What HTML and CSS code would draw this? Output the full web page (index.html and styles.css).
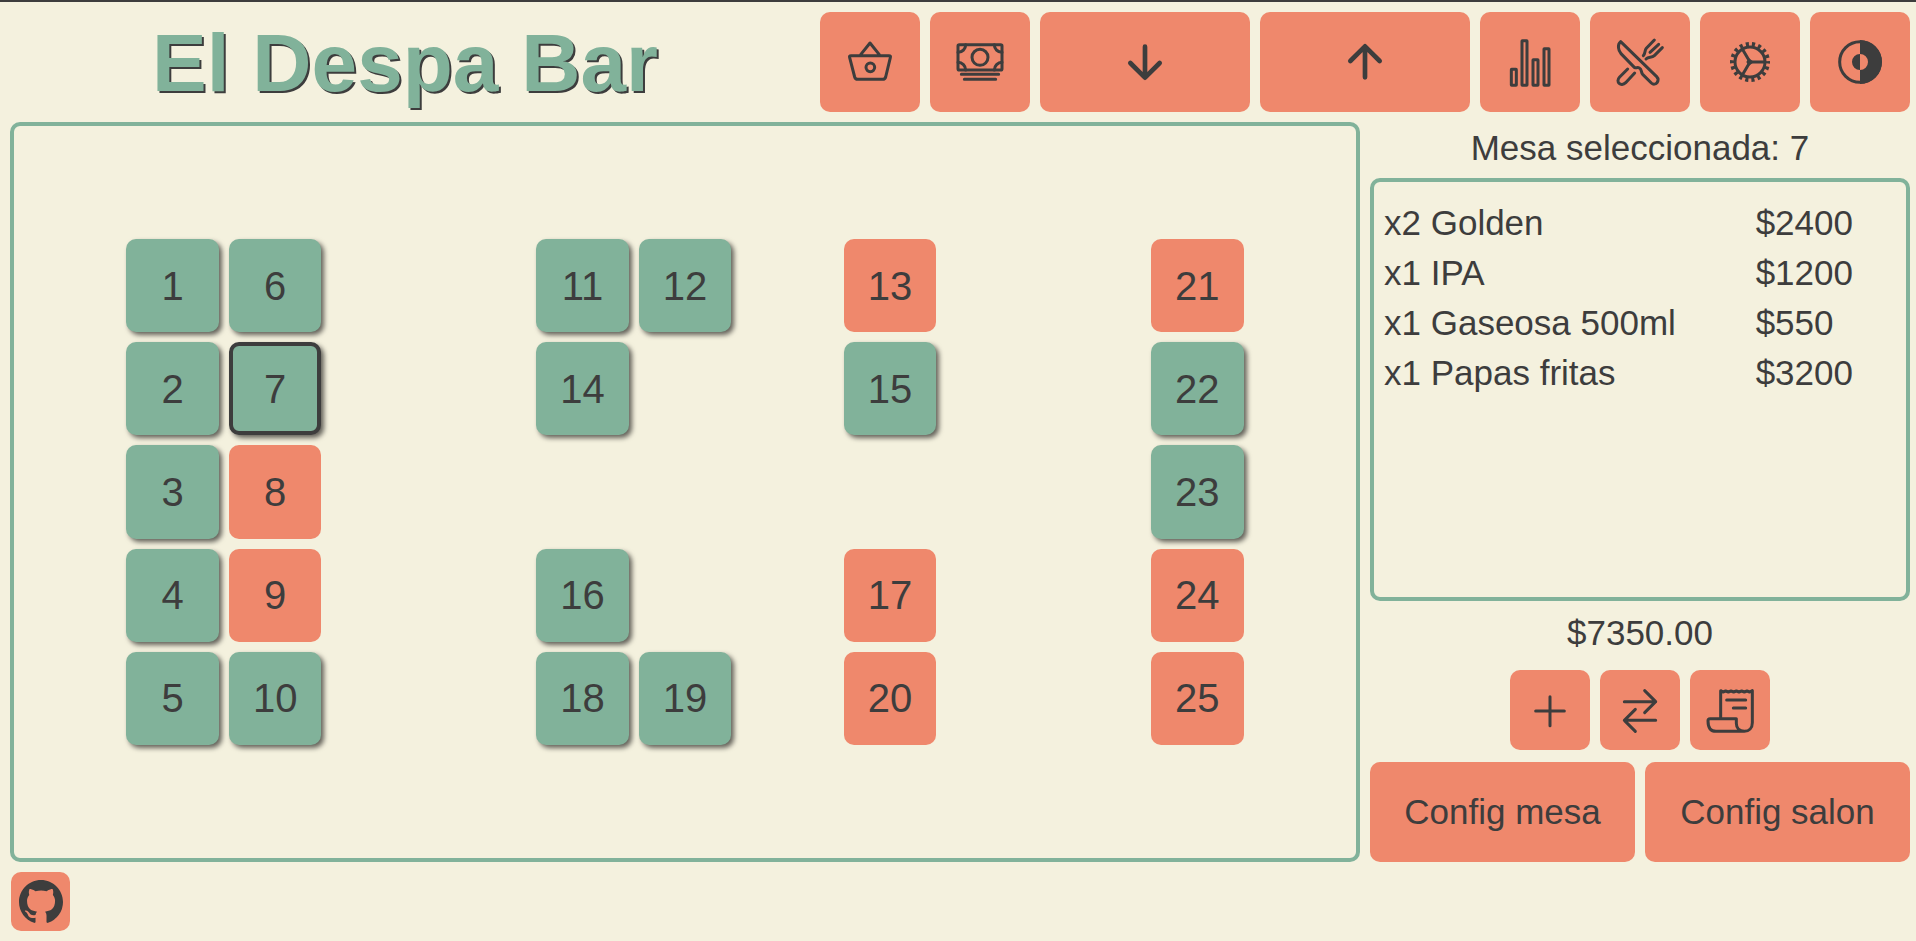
FILE: index.html
```html
<!DOCTYPE html>
<html lang="es">
<head>
<meta charset="utf-8">
<meta name="viewport" content="width=device-width, initial-scale=1">
<title>El Despa Bar</title>
<link rel="stylesheet" href="styles.css">
</head>
<body class="page">
<header class="header">
  <h1 class="title">El Despa Bar</h1>
  <nav class="toolbar" aria-label="Herramientas">
    <button class="btn" type="button" aria-label="Pedidos"><svg class="icon" viewBox="75 75 150 150"><path d="M122 128 150 93 178 128M93 131H207Q213 131 211 137L197 195Q195 202 188 202H113Q106 202 104 195L89 137Q87 131 93 131Z"/><circle cx="151" cy="166" r="13"/></svg></button>
    <button class="btn" type="button" aria-label="Caja"><svg class="icon" viewBox="75 75 150 150"><rect x="84" y="98" width="132" height="76" rx="4"/><circle cx="150" cy="136" r="24"/><path d="M107 98A23 23 0 0 1 84 121M193 98A23 23 0 0 0 216 121M107 174A23 23 0 0 0 84 151M193 174A23 23 0 0 1 216 151M94 187H206M103 202H197"/></svg></button>
    <button class="btn wide" type="button" aria-label="Bajar"><svg class="icon thick" viewBox="75 75 150 150"><path d="M150 104V196M106 153 150 197 194 153"/></svg></button>
    <button class="btn wide" type="button" aria-label="Subir"><svg class="icon thick" viewBox="75 75 150 150"><path d="M150 196V104M106 147 150 103 194 147"/></svg></button>
    <button class="btn" type="button" aria-label="Estadísticas"><svg class="icon" viewBox="75 75 150 150"><rect x="94" y="172" width="15" height="48" rx="1"/><rect x="126" y="86" width="15" height="134" rx="1"/><rect x="159" y="143" width="15" height="77" rx="1"/><rect x="192" y="110" width="15" height="110" rx="1"/></svg></button>
    <button class="btn" type="button" aria-label="Menú"><svg class="icon" viewBox="75 75 150 150"><path d="M92 89 200 194C212 206 196 224 184 213L158 187C152 180 156 172 148 168C142 165 139 169 133 166L93 125C85 115 81 98 92 89ZM193 84 169 109C163 116 167 124 160 131M206 97 180 121M217 107 193 131C185 139 176 133 168 141M113 171 89 195C75 210 93 226 107 212L134 183"/></svg></button>
    <button class="btn" type="button" aria-label="Ajustes"><svg class="icon" viewBox="75 75 150 150"><circle cx="150" cy="150" r="45"/><circle class="teeth" cx="150" cy="150" r="54" pathLength="36"/><path d="M195 150H150L127 111M150 150 127 189"/><path class="solid" d="M139 150 146 138 157 146V154L146 162Z"/></svg></button>
    <button class="btn" type="button" aria-label="Tema"><svg class="icon" viewBox="75 75 150 150"><circle cx="150" cy="150" r="61"/><path class="solid" d="M150 84A66 66 0 0 1 150 216V174A24 24 0 0 0 150 126ZM150 126A24 24 0 0 0 150 174Z"/></svg></button>
  </nav>
</header>

<div class="content">
  <main class="room" aria-label="Salón">
    <button class="mesa busy c2 r2" type="button">1</button>
    <button class="mesa busy c2 r3" type="button">2</button>
    <button class="mesa busy c2 r4" type="button">3</button>
    <button class="mesa busy c2 r5" type="button">4</button>
    <button class="mesa busy c2 r6" type="button">5</button>
    <button class="mesa busy c3 r2" type="button">6</button>
    <button class="mesa busy selected c3 r3" type="button" aria-pressed="true">7</button>
    <button class="mesa c3 r4" type="button">8</button>
    <button class="mesa c3 r5" type="button">9</button>
    <button class="mesa busy c3 r6" type="button">10</button>
    <button class="mesa busy c6 r2" type="button">11</button>
    <button class="mesa busy c7 r2" type="button">12</button>
    <button class="mesa c9 r2" type="button">13</button>
    <button class="mesa busy c6 r3" type="button">14</button>
    <button class="mesa busy c9 r3" type="button">15</button>
    <button class="mesa busy c6 r5" type="button">16</button>
    <button class="mesa c9 r5" type="button">17</button>
    <button class="mesa busy c6 r6" type="button">18</button>
    <button class="mesa busy c7 r6" type="button">19</button>
    <button class="mesa c9 r6" type="button">20</button>
    <button class="mesa c12 r2" type="button">21</button>
    <button class="mesa busy c12 r3" type="button">22</button>
    <button class="mesa busy c12 r4" type="button">23</button>
    <button class="mesa c12 r5" type="button">24</button>
    <button class="mesa c12 r6" type="button">25</button>
  </main>

  <aside class="side">
    <h2 class="side-title">Mesa seleccionada: 7</h2>
    <div class="order">
      <table class="order-table">
        <tbody>
          <tr><td class="item">x2 Golden</td><td class="price">$2400</td></tr>
          <tr><td class="item">x1 IPA</td><td class="price">$1200</td></tr>
          <tr><td class="item">x1 Gaseosa 500ml</td><td class="price">$550</td></tr>
          <tr><td class="item">x1 Papas fritas</td><td class="price">$3200</td></tr>
        </tbody>
      </table>
    </div>
    <p class="total">$7350.00</p>
    <div class="actions">
      <button class="btn small" type="button" aria-label="Agregar"><svg class="icon" viewBox="45 45 150 150"><path d="M120 80V167M77 123H163"/></svg></button>
      <button class="btn small" type="button" aria-label="Transferir"><svg class="icon" viewBox="45 45 150 150"><path d="M73 95H167M134 62 167 95 134 128M167 151H73M106 118 73 151 106 184"/></svg></button>
      <button class="btn small" type="button" aria-label="Cobrar"><svg class="icon" viewBox="45 45 150 150"><path d="M92 146V62L99 66 107 63 115 66 123 63 131 66 139 63 147 66 155 63 163 66 171 63 179 66 187 62V158C187 174 177 184 163 184H78C58 184 54 169 54 152Q54 146 60 146H139V160C139 175 148 184 163 184M110 90H167M130 114H167"/></svg></button>
    </div>
    <div class="config">
      <button class="btn label" type="button">Config mesa</button>
      <button class="btn label" type="button">Config salon</button>
    </div>
  </aside>
</div>

<footer class="footer">
  <a class="github" href="#" aria-label="GitHub"><svg class="github-mark" viewBox="0 0 16 16"><path d="M8 0C3.58 0 0 3.58 0 8c0 3.54 2.29 6.53 5.47 7.59.4.07.55-.17.55-.38 0-.19-.01-.82-.01-1.49-2.01.37-2.53-.49-2.69-.94-.09-.23-.48-.94-.82-1.13-.28-.15-.68-.52-.01-.53.63-.01 1.08.58 1.23.82.72 1.21 1.87.87 2.33.66.07-.52.28-.87.51-1.07-1.78-.2-3.64-.89-3.64-3.95 0-.87.31-1.59.82-2.15-.08-.2-.36-1.02.08-2.12 0 0 .67-.21 2.2.82.64-.18 1.32-.27 2-.27s1.36.09 2 .27c1.53-1.04 2.2-.82 2.2-.82.44 1.1.16 1.92.08 2.12.51.56.82 1.27.82 2.15 0 3.07-1.87 3.75-3.65 3.95.29.25.54.73.54 1.48 0 1.07-.01 1.93-.01 2.2 0 .21.15.46.55.38A8.01 8.01 0 0 0 16 8c0-4.42-3.58-8-8-8z"/></svg></a>
</footer>
</body>
</html>
```
FILE: styles.css
```css
:root {
  --paper: #f4f1de;
  --green: #81b29a;
  --coral: #ef886c;
  --ink: #3d3d3d;
}

* { box-sizing: border-box; }

.page {
  margin: 0;
  min-height: 100vh;
  padding: 10px 6px 10px 10px;
  border-top: 2px solid var(--ink);
  display: flex;
  flex-direction: column;
  gap: 10px;
  background: var(--paper);
  color: var(--ink);
  font-family: "Liberation Sans", Arial, sans-serif;
  font-size: 35px;
}

.header {
  display: grid;
  grid-template-columns: 80fr 109fr;
  gap: 10px;
}

.title {
  margin: 0;
  padding: 1px 10px 0 0;
  text-align: center;
  font-size: 82px;
  line-height: 99px;
  color: var(--green);
  text-shadow: 2px 2px var(--ink);
}

.toolbar {
  display: grid;
  grid-template-columns: 10fr 10fr 21fr 21fr 10fr 10fr 10fr 10fr;
  gap: 10px;
}

.btn {
  min-width: 0;
  height: 100px;
  padding: 0;
  border: 0;
  border-radius: 10px;
  display: flex;
  align-items: center;
  justify-content: center;
  background: var(--coral);
  color: inherit;
  font: inherit;
  cursor: pointer;
}

.btn.small {
  width: 80px;
  height: 80px;
}

.icon {
  width: 50px;
  height: 50px;
  fill: none;
  stroke: currentColor;
  stroke-width: 9;
  stroke-linecap: round;
  stroke-linejoin: round;
}

.icon.thick { stroke-width: 14; }
.icon .solid { fill: currentColor; stroke: none; }
.icon .teeth {
  stroke-width: 12;
  stroke-linecap: butt;
  stroke-dasharray: 1 1;
  stroke-dashoffset: 0.5;
}

.content {
  flex: 1;
  display: grid;
  grid-template-columns: 5fr 2fr;
  gap: 10px;
}

.room {
  padding: 10px;
  border: 4px solid var(--green);
  border-radius: 10px;
  display: grid;
  grid-template-columns: repeat(13, minmax(0, 1fr));
  grid-template-rows: repeat(7, minmax(0, 1fr));
  gap: 10px;
}

.mesa {
  min-width: 0;
  padding: 1px 0 0;
  border: 0;
  border-radius: 10px;
  background: var(--coral);
  color: inherit;
  font-family: inherit;
  font-size: 40px;
  cursor: pointer;
}

.mesa.busy {
  background: var(--green);
  box-shadow: 3px 3px 5px rgba(0, 0, 0, 0.6);
}

.mesa.selected { border: 4px solid var(--ink); }

.c2 { grid-column: 2; }
.c3 { grid-column: 3; }
.c6 { grid-column: 6; }
.c7 { grid-column: 7; }
.c9 { grid-column: 9; }
.c12 { grid-column: 12; }
.r2 { grid-row: 2; }
.r3 { grid-row: 3; }
.r4 { grid-row: 4; }
.r5 { grid-row: 5; }
.r6 { grid-row: 6; }

.side {
  display: flex;
  flex-direction: column;
}

.side-title {
  margin: 0 0 4px;
  text-align: center;
  font-size: 35px;
  font-weight: 400;
  line-height: 52px;
}

.order {
  flex: 1;
  padding: 16px 10px;
  border: 4px solid var(--green);
  border-radius: 10px;
}

.order-table {
  width: 100%;
  table-layout: fixed;
  border-collapse: collapse;
}

.order-table td {
  height: 50px;
  padding: 0;
}

.order-table .item { width: 72%; }
.order-table .price { padding-left: 3px; }

.total {
  margin: 6px 0 11px;
  text-align: center;
  line-height: 52px;
}

.actions {
  display: flex;
  justify-content: center;
  gap: 10px;
  margin-bottom: 12px;
}

.config {
  display: grid;
  grid-template-columns: 1fr 1fr;
  gap: 10px;
}

.footer {
  display: flex;
  padding-left: 1px;
}

.github {
  width: 59px;
  height: 59px;
  border-radius: 10px;
  display: flex;
  align-items: center;
  justify-content: center;
  background: var(--coral);
  color: var(--ink);
}

.github-mark {
  width: 44px;
  height: 44px;
  fill: currentColor;
}
```
